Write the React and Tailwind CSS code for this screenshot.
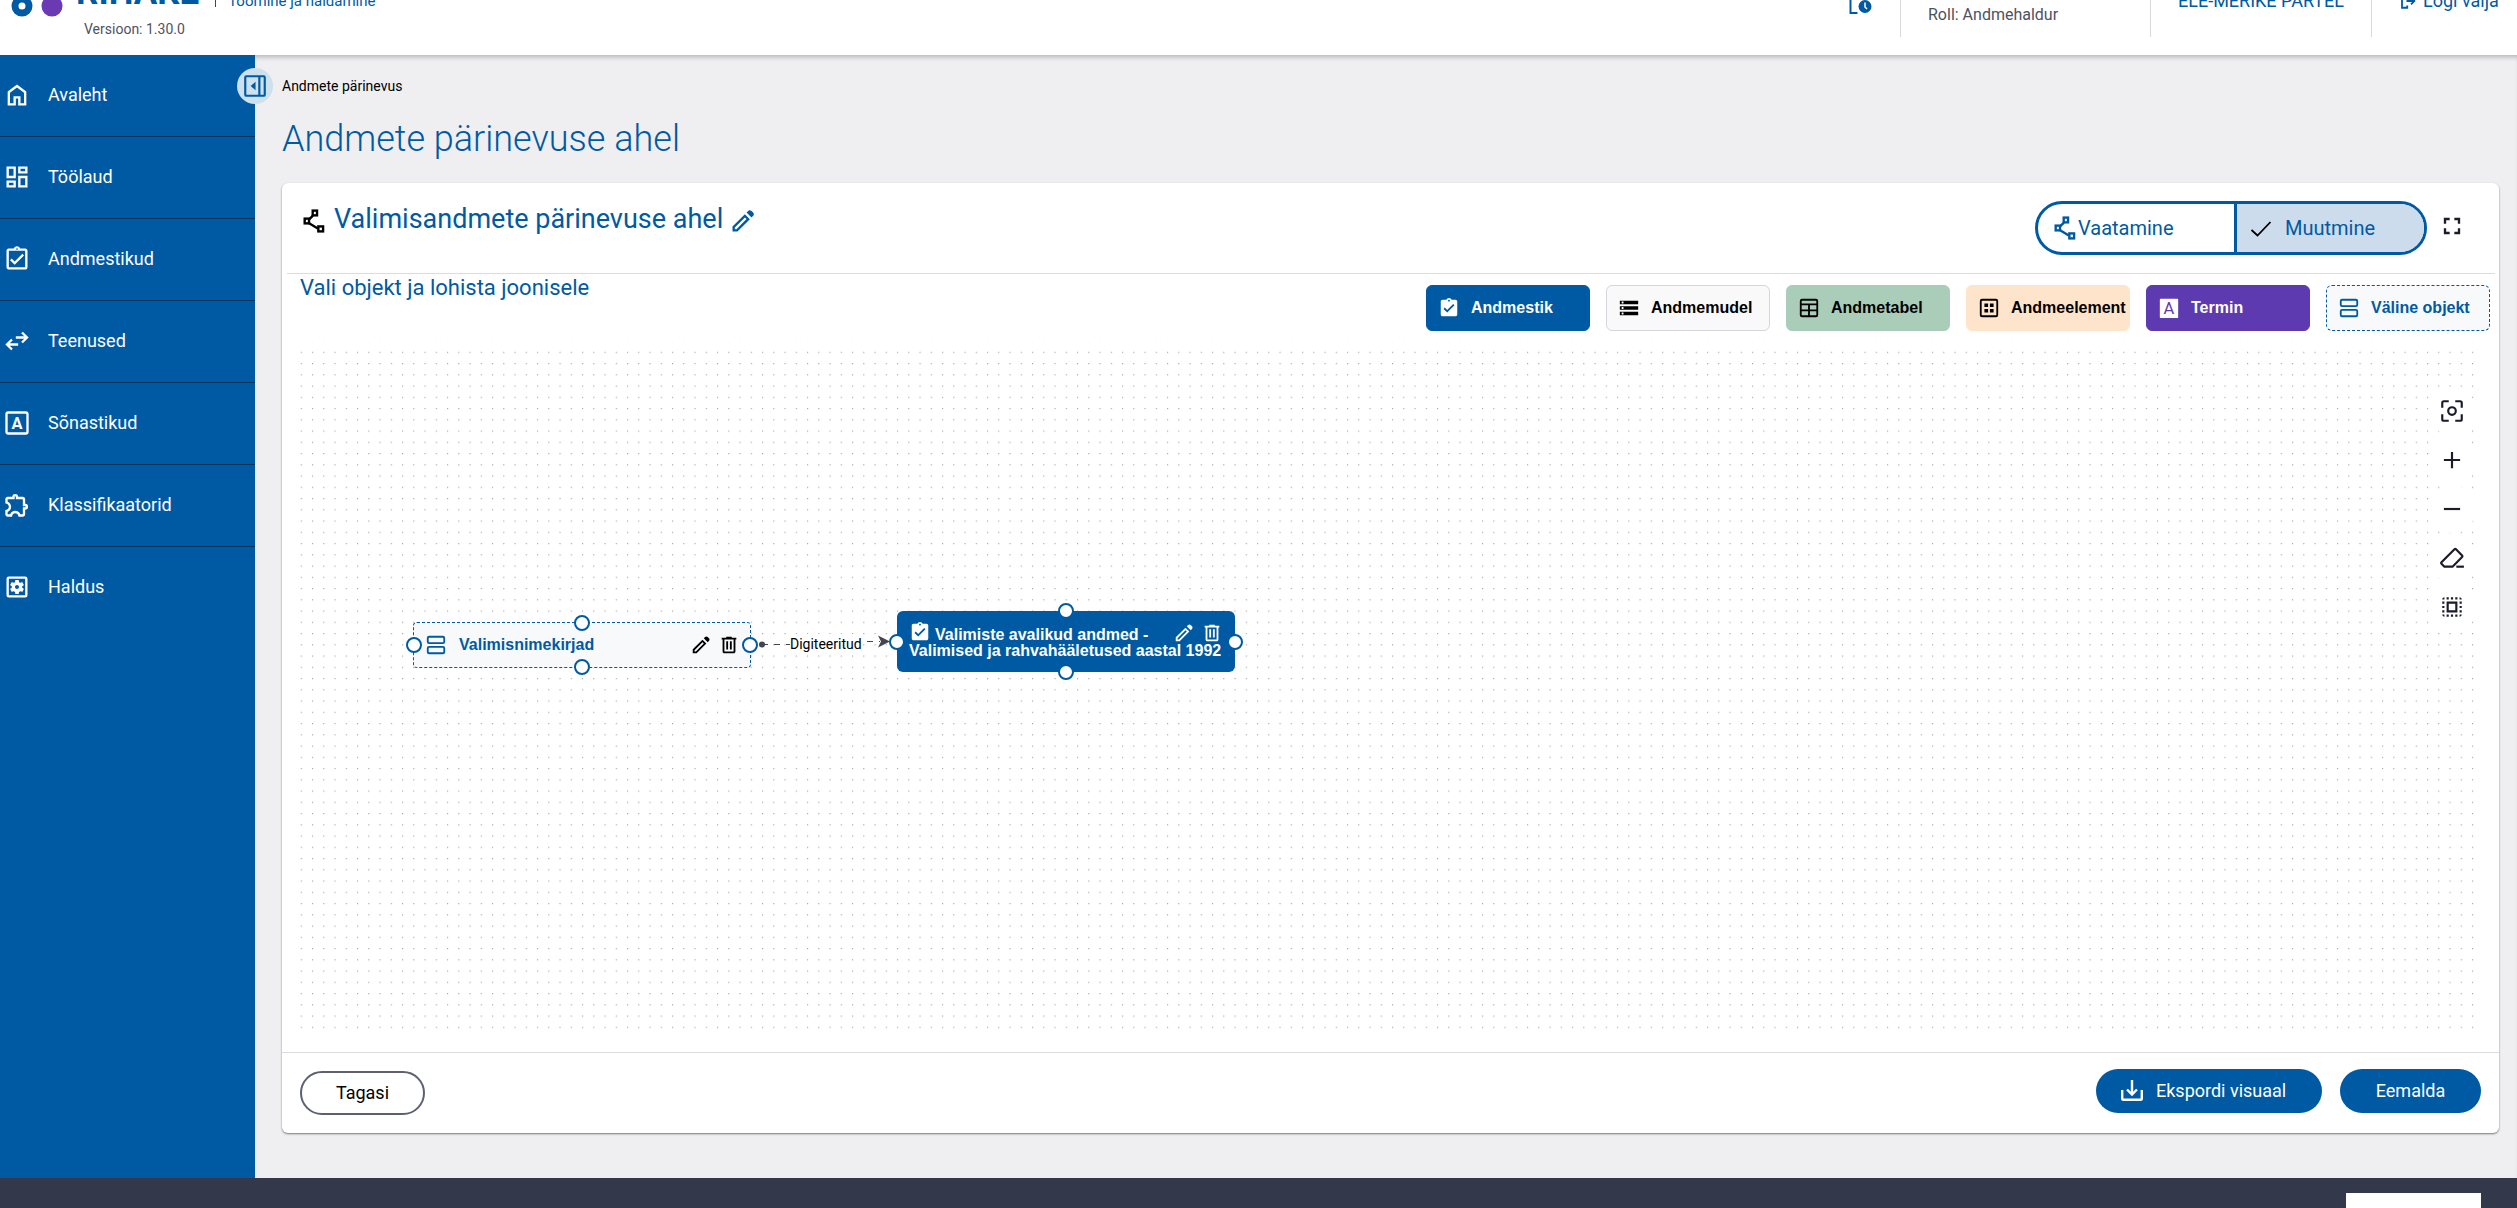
import React from "react";
import {
  MdOutlineAssignmentTurnedIn,
  MdAssignmentTurnedIn,
  MdOutlineDashboard,
  MdOutlineExtension,
  MdOutlineSettingsApplications,
  MdStorage,
  MdSelectAll,
  MdFullscreen,
} from "react-icons/md";

const Icon = ({ className, children }) => (
  <svg
    viewBox="0 0 24 24"
    fill="currentColor"
    className={className}
    aria-hidden="true"
  >
    {children}
  </svg>
);

const HomeIcon = ({ className }) => (
  <Icon className={className}>
    <path d="M6 19h3v-6h6v6h3v-9l-6-4.5L6 10v9Zm-2 2V9l8-6 8 6v12h-7v-6h-2v6H4Z" />
  </Icon>
);

const SyncIcon = ({ className }) => (
  <Icon className={className}>
    <path d="m7 20-5-5 5-5 1.4 1.43L5.83 14H13v2H5.83l2.57 2.58L7 20Zm10-6-1.4-1.43L18.17 10H11V8h7.17L15.6 5.42 17 4l5 5-5 5Z" />
  </Icon>
);

const LetterBoxIcon = ({ className }) => (
  <Icon className={className}>
    <rect
      x="3"
      y="3"
      width="18"
      height="18"
      rx="1.5"
      fill="none"
      stroke="currentColor"
      strokeWidth="2"
    />
    <text
      x="12"
      y="17"
      textAnchor="middle"
      fontSize="14"
      fontWeight="700"
      fontFamily="Roboto, sans-serif"
    >
      A
    </text>
  </Icon>
);

const TermIcon = ({ className }) => (
  <Icon className={className}>
    <rect x="2" y="2" width="20" height="21" rx="1" />
    <text
      x="12"
      y="19"
      textAnchor="middle"
      fontSize="18"
      fontWeight="400"
      fill="#5e3ab0"
      fontFamily="Roboto, sans-serif"
    >
      A
    </text>
  </Icon>
);

const EditIcon = ({ className }) => (
  <Icon className={className}>
    <path d="M5 19h1.4l8.63-8.63-1.4-1.4L5 17.6V19ZM19.3 8.93l-4.25-4.2 1.4-1.4q.58-.58 1.41-.58.84 0 1.42.58l1.4 1.4q.57.57.6 1.38.02.82-.56 1.39L19.3 8.93ZM17.85 10.4 7.25 21H3v-4.25l10.6-10.6 4.25 4.25Z" />
  </Icon>
);

const TrashIcon = ({ className }) => (
  <Icon className={className}>
    <path d="M7 21q-.83 0-1.41-.59Q5 19.83 5 19V6H4V4h5V3h6v1h5v2h-1v13q0 .83-.59 1.41Q17.83 21 17 21H7ZM17 6H7v13h10V6ZM9 17h2V8H9v9Zm4 0h2V8h-2v9Z" />
  </Icon>
);

const FlowIcon = ({ className }) => (
  <Icon className={className}>
    <g fill="none" stroke="currentColor" strokeWidth="2.2">
      <path d="m11 7-3.5 3.5M7.500 14l8 5" />
      <rect x="10.8" y="2.4" width="4" height="4.400" />
      <rect x="3.4" y="9.8" width="4" height="4.400" />
      <rect x="16" y="17" width="4.4" height="4.600" />
    </g>
  </Icon>
);

const PanelIcon = ({ className }) => (
  <Icon className={className}>
    <g fill="none" stroke="currentColor" strokeWidth="2">
      <rect x="3" y="3" width="18" height="18" rx="1" />
      <path d="M16 3v18" />
    </g>
    <path d="M12.5 8v8L8 12Z" />
  </Icon>
);

const TableIcon = ({ className }) => (
  <Icon className={className}>
    <g fill="none" stroke="currentColor" strokeWidth="2">
      <rect x="3" y="3" width="18" height="18" rx="1.5" />
      <path d="M3 8h18M3 14.5h18M12 8v13" />
    </g>
  </Icon>
);

const ElementIcon = ({ className }) => (
  <Icon className={className}>
    <rect
      x="3"
      y="3"
      width="18"
      height="18"
      rx="1.5"
      fill="none"
      stroke="currentColor"
      strokeWidth="2"
    />
    <path d="M7 7h4v4H7zM13 7h4v4h-4zM7 13h4v4H7zM13 13h4v4h-4z" />
  </Icon>
);

const StackIcon = ({ className }) => (
  <Icon className={className}>
    <g fill="none" stroke="currentColor" strokeWidth="2">
      <rect x="3" y="3" width="18" height="7" rx="1.5" />
      <rect x="3" y="14" width="18" height="7" rx="1.5" />
    </g>
  </Icon>
);

const CheckIcon = ({ className }) => (
  <Icon className={className}>
    <path
      d="m2.5 14 6 5.500L21.500 6"
      fill="none"
      stroke="currentColor"
      strokeWidth="1.8"
    />
  </Icon>
);

const FocusIcon = ({ className }) => (
  <Icon className={className}>
    <g fill="none" stroke="currentColor" strokeWidth="2">
      <path d="M3 9V4.500Q3 3 4.500 3H9M15 3h4.500Q21 3 21 4.500V9M21 15v4.500q0 1.500-1.500 1.500H15M9 21H4.500Q3 21 3 19.500V15" />
      <circle cx="12" cy="12" r="3.5" />
    </g>
  </Icon>
);

const PlusIcon = ({ className }) => (
  <Icon className={className}>
    <path d="M11 11V4.500h2V11h6.500v2H13v6.500h-2V13H4.500v-2z" />
  </Icon>
);

const MinusIcon = ({ className }) => (
  <Icon className={className}>
    <path d="M4.500 11h15v2h-15z" />
  </Icon>
);

const EraserIcon = ({ className }) => (
  <Icon className={className}>
    <g fill="none" stroke="currentColor" strokeWidth="2">
      <path d="M5 20 2.300 17.300q-.7-.7 0-1.400L14.300 4q.7-.7 1.400 0l5.600 5.600q.7.7 0 1.400L12.500 20Z" />
      <path d="M16 20h7" />
    </g>
  </Icon>
);

const DownloadIcon = ({ className }) => (
  <Icon className={className}>
    <g fill="none" stroke="currentColor" strokeWidth="2.4">
      <path d="M12 1v14M7 10.500l5 5 5-5" />
      <path d="M2.200 11v8.500q0 1.300 1.300 1.300h17q1.300 0 1.300-1.300V11" />
    </g>
  </Icon>
);

const LogoutIcon = ({ className }) => (
  <Icon className={className}>
    <g fill="none" stroke="currentColor" strokeWidth="2.4">
      <path d="M11 3H4v18h7v-3M10 12h10M16 7.500l4.500 4.500-4.500 4.500" />
    </g>
  </Icon>
);

const HistoryIcon = ({ className }) => (
  <Icon className={className}>
    <path
      d="M9.500 22H2.500V2h13v5"
      fill="none"
      stroke="currentColor"
      strokeWidth="2"
    />
    <circle cx="17" cy="15.5" r="6.5" />
    <path
      d="M17 11.500v4.500l2 2"
      fill="none"
      stroke="white"
      strokeWidth="1.5"
    />
  </Icon>
);

const menuItems = [
  { id: 1, icon: HomeIcon, title: "Avaleht" },
  { id: 2, icon: MdOutlineDashboard, title: "Töölaud" },
  { id: 3, icon: MdOutlineAssignmentTurnedIn, title: "Andmestikud" },
  { id: 4, icon: SyncIcon, title: "Teenused" },
  { id: 5, icon: LetterBoxIcon, title: "Sõnastikud" },
  { id: 6, icon: MdOutlineExtension, title: "Klassifikaatorid" },
  { id: 7, icon: MdOutlineSettingsApplications, title: "Haldus" },
];

const palette = [
  {
    title: "Andmestik",
    icon: MdAssignmentTurnedIn,
    style: "bg-[#005aa3] border-[#005aa3] text-white",
  },
  {
    title: "Andmemudel",
    icon: MdStorage,
    style: "bg-[#f9f9f9] border-[#d5d5db] text-black",
  },
  {
    title: "Andmetabel",
    icon: TableIcon,
    style: "bg-[#aacdb9] border-[#aacdb9] text-black",
  },
  {
    title: "Andmeelement",
    icon: ElementIcon,
    style: "bg-[#ffe4cc] border-[#ffe4cc] text-black",
  },
  {
    title: "Termin",
    icon: TermIcon,
    style: "bg-[#5e3ab0] border-[#5e3ab0] text-white",
  },
  {
    title: "Väline objekt",
    icon: StackIcon,
    style: "bg-[#f8f9fb] border-dashed border-[#005aa3] text-[#005aa3]",
  },
];

const tools = [
  { title: "Keskenda", icon: FocusIcon },
  { title: "Suurenda", icon: PlusIcon },
  { title: "Vähenda", icon: MinusIcon },
  { title: "Kustuta", icon: EraserIcon },
  { title: "Vali kõik", icon: MdSelectAll },
];

const Header = () => (
  <header className="relative z-10 flex h-[55px] items-end justify-between overflow-hidden bg-white text-[#005aa3]">
    <div className="shrink-0 pb-4">
      <div className="flex items-end">
        <svg
          viewBox="0 0 64 48"
          className="mr-3 h-12 w-16 shrink-0"
          aria-hidden="true"
        >
          <circle cx="22" cy="35" r="7" fill="none" stroke="#005aa3" strokeWidth="7" />
          <circle cx="52" cy="35" r="10.5" fill="#6a3ab5" />
        </svg>
        <span className="mb-1.5 text-[35px] leading-10 font-bold">RIHAKE</span>
        <span className="mb-3 ml-4 h-8 w-px bg-[#005aa3]" />
        <span className="mb-2 ml-3 text-[15px] leading-5">
          Toomine ja haldamine
        </span>
      </div>
      <p className="pl-[84px] text-sm leading-5 text-[#4f5161]">
        Versioon: 1.30.0
      </p>
    </div>

    <div className="flex h-20 shrink-0 items-stretch pb-[18px]">
      <button
        type="button"
        aria-label="Ajalugu"
        className="mr-7 flex items-end pb-[22px]"
      >
        <HistoryIcon className="h-6 w-6" />
      </button>
      <div className="flex w-[250px] items-end border-l border-[#d9d9de] pb-3 pl-[27px] text-base leading-5 text-[#4f5161]">
        Roll: Andmehaldur
      </div>
      <div className="flex w-[221px] items-end border-l border-[#d9d9de] pb-[26px] pl-[27px] text-lg leading-5">
        <a href="#profile">ELE-MERIKE PÄRTEL</a>
      </div>
      <div className="flex w-[146px] items-end border-l border-[#d9d9de] pb-[26px] pl-[27px] text-lg leading-5">
        <a href="#logout" className="flex items-center gap-1.5 whitespace-nowrap">
          <LogoutIcon className="h-[18px] w-[18px]" />
          Logi välja
        </a>
      </div>
    </div>
  </header>
);

const Sidebar = () => (
  <aside className="relative z-20 w-[255px] shrink-0 bg-[#005aa3] text-white">
    <nav className="flex flex-col divide-y divide-[#003560]">
      {menuItems.map((item) => (
        <a
          key={item.id}
          href={`#menu-${item.id}`}
          className="flex h-[82px] items-center gap-[17px] pb-0.5 pl-[3px] text-lg"
        >
          <item.icon className="h-7 w-7" />
          <span>{item.title}</span>
        </a>
      ))}
    </nav>
    <button
      type="button"
      aria-label="Sulge menüü"
      className="absolute top-[13px] -right-[18px] flex h-9 w-9 items-center justify-center rounded-full bg-[#cce0ee] text-[#005aa3]"
    >
      <PanelIcon className="h-[26px] w-[26px]" />
    </button>
  </aside>
);

const Handles = () => (
  <>
    <span className="absolute top-0 left-1/2 h-4 w-4 -translate-1/2 rounded-full border-2 border-[#005aa3] bg-white" />
    <span className="absolute top-1/2 left-0 h-4 w-4 -translate-1/2 rounded-full border-2 border-[#005aa3] bg-white" />
    <span className="absolute top-1/2 left-full h-4 w-4 -translate-1/2 rounded-full border-2 border-[#005aa3] bg-white" />
    <span className="absolute top-full left-1/2 h-4 w-4 -translate-1/2 rounded-full border-2 border-[#005aa3] bg-white" />
  </>
);

const NodeActions = () => (
  <div className="flex gap-1.5">
    <button type="button" aria-label="Muuda">
      <EditIcon className="h-[22px] w-[22px]" />
    </button>
    <button type="button" aria-label="Eemalda objekt">
      <TrashIcon className="h-[22px] w-[22px]" />
    </button>
  </div>
);

const Canvas = () => (
  <div className="relative mx-[18px] mb-[22px] flex-1">
    <svg className="absolute inset-0 h-full w-full" aria-hidden="true">
      <pattern
        id="dots"
        x="0.75"
        y="-1.5"
        width="11.25"
        height="11.25"
        patternUnits="userSpaceOnUse"
      >
        <circle cx="0.6" cy="0.6" r="0.6" fill="#91919a" />
      </pattern>
      <rect width="99.8%" height="100%" fill="url(#dots)" />
      <g fill="none" stroke="#45454f">
        <path d="M462 302.500H526.500V299.500H580" strokeDasharray="6 6" />
      </g>
      <circle cx="462" cy="302.5" r="3" fill="#45454f" />
      <path d="m578 293.500 12 6-12 6 3-6z" fill="#45454f" />
    </svg>
    <span className="absolute top-[292px] left-[490px] bg-white text-sm leading-5 text-black">
      Digiteeritud
    </span>

    <div className="absolute top-[280px] left-[113px] flex h-[46px] w-[338px] items-center justify-between rounded border border-dashed border-[#005aa3] bg-[#f8f9fb] pr-2.5 pl-[11px]">
      <div className="flex items-center gap-3 font-['Liberation_Sans',sans-serif] font-bold text-[#005aa3]">
        <StackIcon className="h-[22px] w-[22px]" />
        Valimisnimekirjad
      </div>
      <NodeActions />
      <Handles />
    </div>

    <div className="absolute top-[269px] left-[597px] h-[61px] w-[338px] rounded-md bg-[#005aa3] px-3 pt-4 text-white">
      <p className="font-['Liberation_Sans',sans-serif] leading-4 font-bold">
        <MdAssignmentTurnedIn className="-mt-2 mr-1 -mb-px inline h-[22px] w-[22px] align-middle" />
        Valimiste avalikud andmed -<br />
        Valimised ja rahvahääletused aastal 1992
      </p>
      <div className="absolute top-[11px] right-3">
        <NodeActions />
      </div>
      <Handles />
    </div>

    <div className="absolute top-[45px] right-[5px] flex flex-col gap-px text-[#1b1b2b]">
      {tools.map((tool) => (
        <button
          key={tool.title}
          type="button"
          aria-label={tool.title}
          className="flex h-12 w-12 items-center justify-center rounded-full bg-white"
        >
          <tool.icon className="h-[26px] w-[26px]" />
        </button>
      ))}
    </div>
  </div>
);

const App = () => {
  return (
    <div className="flex min-h-screen flex-col bg-[#efeff1] font-[Roboto,sans-serif] text-black">
      <Header />

      <div className="flex flex-1">
        <Sidebar />

        <main className="flex min-w-0 flex-1 flex-col pr-[18px] pb-[45px] pl-[27px] shadow-[inset_0_5px_5px_-3px_rgba(0,0,0,0.25)]">
          <p className="pt-[21px] text-sm leading-5">Andmete pärinevus</p>
          <h1 className="mt-[19px] mb-5 text-4xl leading-[48px] font-light text-[#005aa3]">
            Andmete pärinevuse ahel
          </h1>

          <section className="flex flex-1 flex-col rounded-md bg-white shadow-[0_1px_2px_rgba(0,0,0,0.5)]">
            <div className="mr-1 ml-[5px] flex justify-between border-b border-[#dcdce0] py-[18px] pr-[29px] pl-3.5">
              <h2 className="flex h-9 items-center text-[27px] text-[#005aa3]">
                <FlowIcon className="mt-1 mr-[7px] h-[26px] w-[26px] text-black" />
                Valimisandmete pärinevuse ahel
                <button type="button" aria-label="Muuda nime" className="mt-1 ml-1.5">
                  <EditIcon className="h-7 w-7" />
                </button>
              </h2>

              <div className="flex items-center gap-[11px]">
                <div className="flex h-[54px] overflow-hidden rounded-full border-3 border-[#005aa3] text-xl text-[#005aa3]">
                  <button
                    type="button"
                    aria-pressed="false"
                    className="flex w-[199px] items-center border-r-3 border-[#005aa3] pl-3.5"
                  >
                    <FlowIcon className="h-[26px] w-[26px]" />
                    Vaatamine
                  </button>
                  <button
                    type="button"
                    aria-pressed="true"
                    className="flex w-[187px] items-center gap-3 bg-[#ccdcec] pl-3"
                  >
                    <CheckIcon className="h-6 w-6 text-black" />
                    Muutmine
                  </button>
                </div>
                <button
                  type="button"
                  aria-label="Täisekraan"
                  className="mb-1 text-[#1b1b2b]"
                >
                  <MdFullscreen className="h-7 w-7" />
                </button>
              </div>
            </div>

            <div className="flex justify-between pr-[9px] pb-[11px] pl-[18px]">
              <h3 className="text-[22px] leading-7 text-[#005aa3]">
                Vali objekt ja lohista joonisele
              </h3>
              <div className="flex gap-4 pt-[11px]">
                {palette.map((item) => (
                  <button
                    key={item.title}
                    type="button"
                    className={`flex h-[46px] w-[164px] items-center gap-[11px] rounded-md border pl-[11px] font-['Liberation_Sans',sans-serif] font-bold whitespace-nowrap ${item.style}`}
                  >
                    <item.icon className="h-[22px] w-[22px] shrink-0" />
                    {item.title}
                  </button>
                ))}
              </div>
            </div>

            <Canvas />

            <div className="flex h-[81px] items-center justify-between border-t border-[#dcdce0] px-[18px] text-lg">
              <button
                type="button"
                className="h-11 w-[125px] rounded-full border-2 border-[#5d6071]"
              >
                Tagasi
              </button>
              <div className="mb-1 flex gap-[18px] text-white">
                <button
                  type="button"
                  className="flex h-11 w-[226px] items-center gap-3 rounded-full bg-[#005aa3] pl-6"
                >
                  <DownloadIcon className="h-6 w-6" />
                  Ekspordi visuaal
                </button>
                <button
                  type="button"
                  className="h-11 w-[141px] rounded-full bg-[#005aa3]"
                >
                  Eemalda
                </button>
              </div>
            </div>
          </section>
        </main>
      </div>

      <footer className="flex h-[30px] justify-end bg-[#34384b] pt-[15px] pr-9">
        <div className="w-[135px] bg-white" />
      </footer>
    </div>
  );
};

export default App;
